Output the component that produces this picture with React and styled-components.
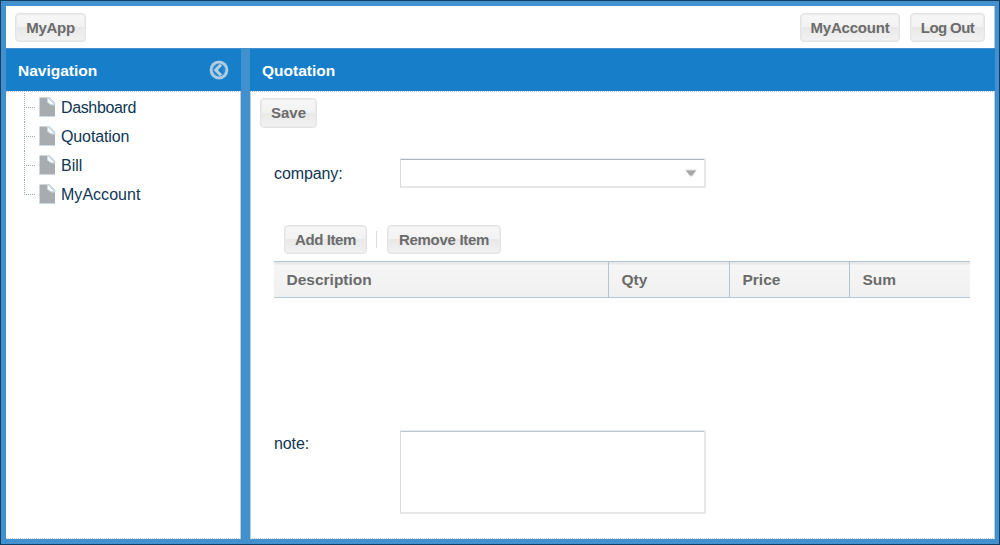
import React from "react";
import styled, { createGlobalStyle } from "styled-components";

const GlobalStyle = createGlobalStyle`
  *, *::before, *::after { box-sizing: border-box; }
  body {
    margin: 0;
    overflow: hidden;
    font-family: "Liberation Sans", Arial, Helvetica, sans-serif;
    font-size: 16px;
    color: #0f3654;
  }
`;

const Viewport = styled.div`
  display: flex;
  flex-direction: column;
  width: 1000px;
  height: 545px;
  padding: 5px 4px 5px 5px;
  background: #4290ce;
  border: 1px solid #123f66;
`;

const TopBar = styled.header`
  display: flex;
  align-items: flex-start;
  gap: 10px;
  flex: 0 0 42px;
  padding: 7px 9px 0 9px;
  background: #fff;
  border-right: 1px solid #b3cde1;
`;

const Spacer = styled.div`
  flex: 1;
`;

const Button = styled.button`
  display: flex;
  align-items: center;
  justify-content: center;
  flex: none;
  width: ${(p) => p.$width}px;
  height: ${(p) => p.$height || 29}px;
  margin: 0;
  padding: 0 0 1px;
  border: 1px solid #e3e3e3;
  border-radius: 4px;
  background: linear-gradient(#f7f7f7 0%, #f2f2f2 48%, #e8e8e8 50%, #f2f2f2 100%);
  box-shadow: inset 0 0 0 1px #ebebeb;
  color: #6b6b6b;
  font: bold 15px "Liberation Sans", Arial, sans-serif;
  letter-spacing: ${(p) => p.$tracking || 0}px;
  white-space: nowrap;
`;

const Body = styled.div`
  display: grid;
  grid-template-columns: 235px 745px;
  column-gap: 9px;
  flex: 1;
  min-height: 0;
`;

const Panel = styled.section`
  display: flex;
  flex-direction: column;
  min-width: 0;
  background: #fff;
`;

const PanelHeader = styled.div`
  display: flex;
  align-items: center;
  justify-content: space-between;
  flex: 0 0 43px;
  padding: 0 12px;
  background: #177eca;
  border-top: 1px solid #4290ce;
`;

const PanelTitle = styled.h2`
  margin: 0;
  padding-top: 2px;
  color: #fff;
  font-size: 15.5px;
  font-weight: bold;
  line-height: 20px;
`;

const PanelBody = styled.div`
  flex: 1;
  min-height: 0;
  border: 1px solid #b9d0e2;
  border-top: 1px dotted #b5c1ca;
  border-bottom: 1px dotted #c7cbce;
  border-left-width: ${(p) => (p.$nav ? 0 : 1)}px;
`;

const Tree = styled.ul`
  margin: 0;
  padding: 1px 0 0 17px;
  list-style: none;
`;

const TreeItem = styled.li`
  display: flex;
  align-items: center;
  height: 29px;
`;

const TreeLabel = styled.span`
  padding-left: 4px;
  line-height: 20px;
  letter-spacing: ${(p) => p.$tracking || 0}px;
`;

const Toolbar = styled.div`
  display: flex;
  height: 44px;
  padding: 6px 0 0 9px;
`;

const Form = styled.div`
  padding-left: 23px;
`;

const FieldRow = styled.label`
  display: flex;
  margin-top: ${(p) => p.$top}px;
`;

const FieldLabel = styled.span`
  flex: 0 0 126px;
  padding-top: ${(p) => p.$offset}px;
  line-height: 20px;
  letter-spacing: -0.1px;
`;

const ComboBox = styled.div`
  display: flex;
  align-items: center;
  justify-content: flex-end;
  width: 306px;
  height: 30px;
  padding-right: 7px;
  background: #fff;
  border: 2px solid #e7e7e7;
  border-top: 1px solid #ededed;
  border-left: 1px solid #d9d9d9;
  box-shadow: inset 0 1px #a9b8c4;
`;

const NoteArea = styled.textarea`
  display: block;
  width: 306px;
  height: 84px;
  margin: 0;
  resize: none;
  background: #fff;
  border: 2px solid #e7e7e7;
  border-top: 1px solid #ededed;
  border-left: 1px solid #d9d9d9;
  border-radius: 0;
  box-shadow: inset 0 1px #b6c6d2;
`;

const GridToolbar = styled.div`
  display: flex;
  align-items: center;
  height: 29px;
  margin-top: 37px;
  padding-left: 10px;
`;

const Separator = styled.div`
  flex: none;
  width: 1px;
  height: 17px;
  margin: 0 10px 0 9px;
  background: #dedede;
`;

const ItemGrid = styled.div`
  width: 696px;
  height: 169px;
  margin-top: 7px;
`;

const GridHeader = styled.div`
  display: grid;
  grid-template-columns: 335px 121px 120px 1fr;
  height: 37px;
  border-top: 1px solid #b2c8d9;
  border-bottom: 1px solid #b2c8d9;
  background: linear-gradient(#e7e7e7 0, #e7e7e7 2px, #f6f6f6 3px, #f0f0f0 100%);
`;

const HeaderCell = styled.div`
  display: flex;
  align-items: center;
  padding-left: 12.5px;
  border-right: 1px solid #b2c5d4;
  color: #6b6b6b;
  font-size: 15.5px;
  font-weight: bold;
  &:last-child { border-right: 0; }
`;

const Drawing = styled.svg`
  display: block;
  flex: none;
`;

function TreeGuide({ last }) {
  return (
    <Drawing width="16" height="29" viewBox="0 0 16 29" fill="none" stroke="#98a8b6" strokeDasharray="1 1">
      <path d={last ? "M1.5 0V15" : "M1.5 0V29"} />
      <path d="M3 14.5H12" />
    </Drawing>
  );
}

function PageIcon() {
  return (
    <Drawing width="18" height="29" viewBox="0 0 18 29">
      <path d="M1 4.5H10.5L16 10V24H1Z" fill="#a9acae" />
      <path d="M.5 4.5V23.5H16" fill="none" stroke="#c9d8e3" />
      <path d="M8 4.5H10.8L16.3 10V12.5H12.5L8 9.5Z" fill="#c9dae6" />
      <path d="M9 5.5L14.5 11H11.5L9 9Z" fill="#fff" />
    </Drawing>
  );
}

function CollapseIcon() {
  return (
    <Drawing width="20" height="20" viewBox="0 0 20 20" fill="none">
      <circle cx="10" cy="10" r="9.4" fill="#a8c9e2" />
      <circle cx="10" cy="10" r="6.4" fill="#2f8acd" />
      <circle cx="10" cy="10" r="8" stroke="#c8d5df" strokeWidth="1" strokeDasharray="1 1" />
      <path d="M12 4.8L6.8 10L12 15.2" stroke="#b5d0e5" strokeWidth="3" />
      <path d="M14 7L11 10L14 13" stroke="#177eca" strokeWidth="2" />
    </Drawing>
  );
}

function DropArrow() {
  return (
    <Drawing width="12" height="8" viewBox="0 0 12 8">
      <path d="M0 .5H12L7.5 7.5H4.5Z" fill="#e2e2e2" />
      <path d="M1 1.5H11L7 6.5H5Z" fill="#a5a5a5" />
    </Drawing>
  );
}

const pages = [
  { name: "Dashboard", tracking: -0.36 },
  { name: "Quotation", tracking: -0.12 },
  { name: "Bill", tracking: 0 },
  { name: "MyAccount", tracking: 0.03 },
];

export default function App() {
  return (
    <>
      <GlobalStyle />
      <Viewport>
        <TopBar>
          <Button $width={71} $tracking={-0.3}>MyApp</Button>
          <Spacer />
          <Button $width={100} $tracking={-0.2}>MyAccount</Button>
          <Button $width={75} $tracking={-0.6}>Log Out</Button>
        </TopBar>
        <Body>
          <Panel>
            <PanelHeader>
              <PanelTitle>Navigation</PanelTitle>
              <CollapseIcon />
            </PanelHeader>
            <PanelBody $nav>
              <Tree>
                {pages.map((page, i) => (
                  <TreeItem key={page.name}>
                    <TreeGuide last={i === pages.length - 1} />
                    <PageIcon />
                    <TreeLabel $tracking={page.tracking}>{page.name}</TreeLabel>
                  </TreeItem>
                ))}
              </Tree>
            </PanelBody>
          </Panel>
          <Panel>
            <PanelHeader>
              <PanelTitle>Quotation</PanelTitle>
            </PanelHeader>
            <PanelBody>
              <Toolbar>
                <Button $width={57} $height={30}>Save</Button>
              </Toolbar>
              <Form>
                <FieldRow $top={22}>
                  <FieldLabel $offset={6}>company:</FieldLabel>
                  <ComboBox>
                    <DropArrow />
                  </ComboBox>
                </FieldRow>
                <GridToolbar>
                  <Button $width={83} $tracking={-0.4}>Add Item</Button>
                  <Separator />
                  <Button $width={114} $tracking={-0.3}>Remove Item</Button>
                </GridToolbar>
                <ItemGrid>
                  <GridHeader>
                    <HeaderCell>Description</HeaderCell>
                    <HeaderCell>Qty</HeaderCell>
                    <HeaderCell>Price</HeaderCell>
                    <HeaderCell>Sum</HeaderCell>
                  </GridHeader>
                </ItemGrid>
                <FieldRow $top={0}>
                  <FieldLabel $offset={4}>note:</FieldLabel>
                  <NoteArea />
                </FieldRow>
              </Form>
            </PanelBody>
          </Panel>
        </Body>
      </Viewport>
    </>
  );
}
